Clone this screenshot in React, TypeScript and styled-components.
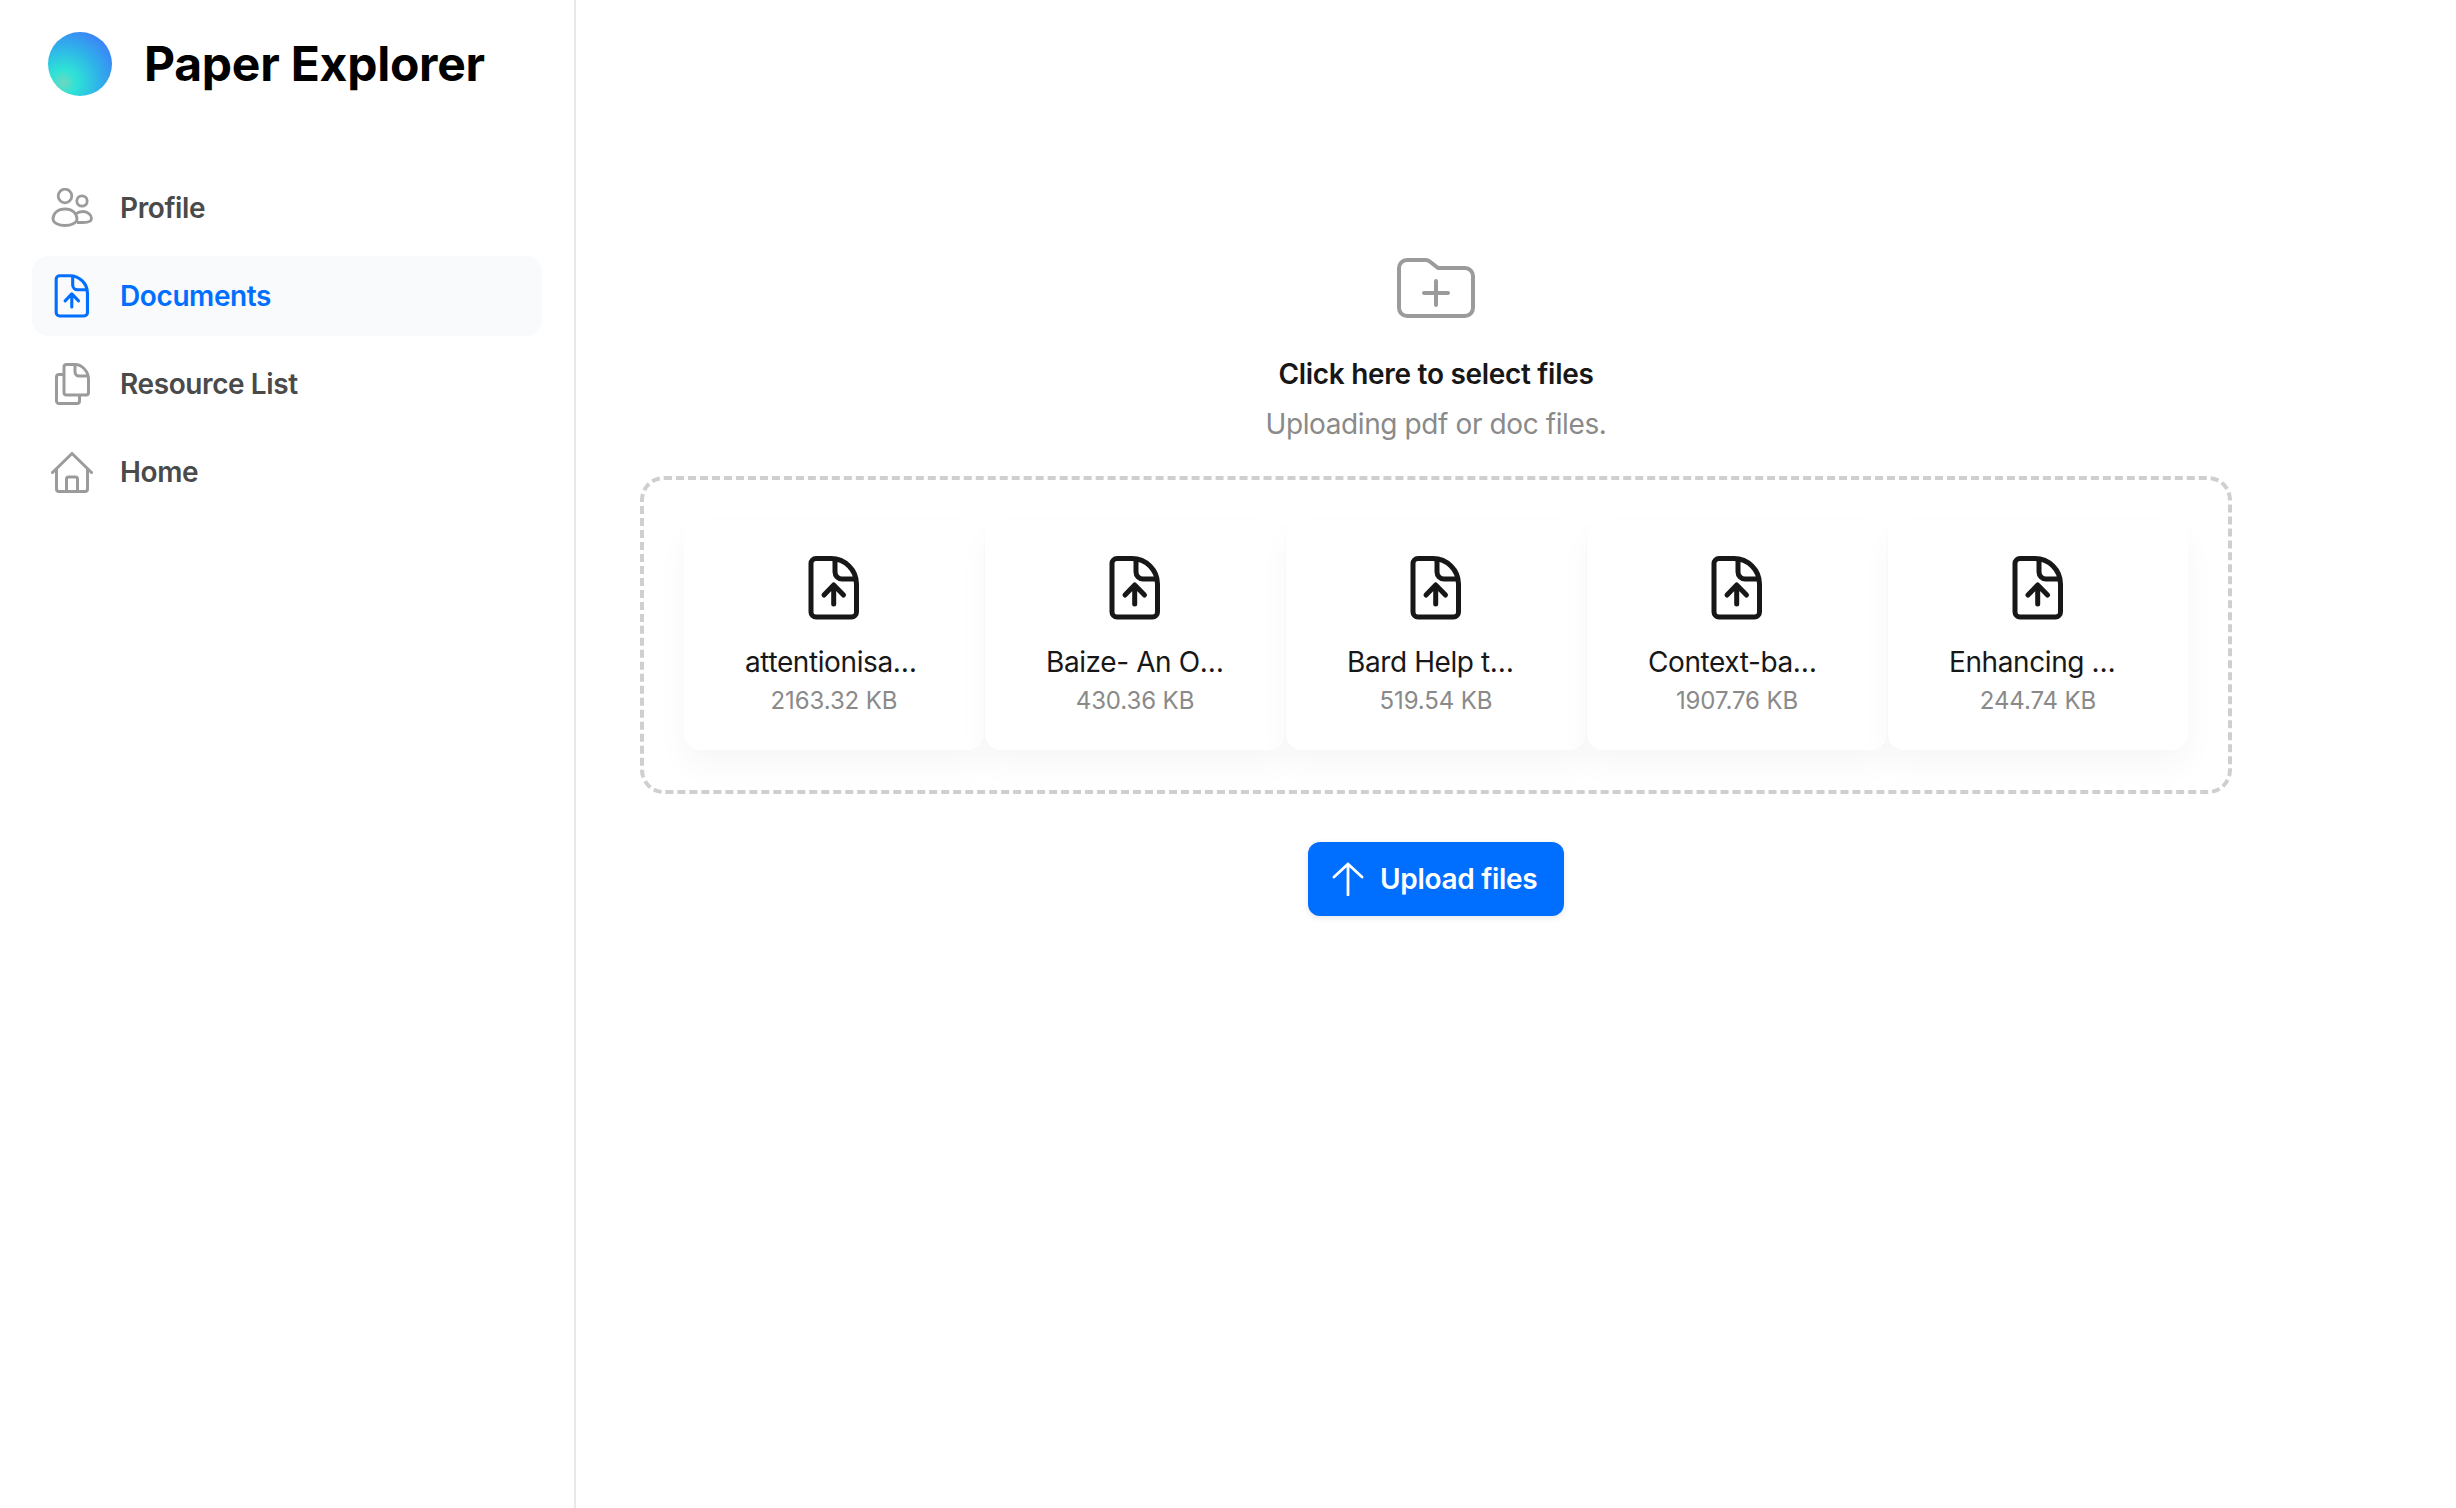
import React from "react";
import styled, { createGlobalStyle } from "styled-components";

const GlobalStyle = createGlobalStyle`
	* {
		box-sizing: border-box;
	}
	html,
	body {
		margin: 0;
		background: #fff;
		font-family: Inter, "Liberation Sans", sans-serif;
	}
`;

const Page = styled.div`
	display: flex;
	width: 2456px;
	height: 1508px;
	overflow: hidden;
`;

const Sidebar = styled.aside`
	width: 576px;
	height: 100%;
	flex-shrink: 0;
	border-right: 2px solid #e8e8e8;
	padding: 32px 32px 0;
`;

const Brand = styled.div`
	display: flex;
	align-items: center;
	gap: 32px;
	padding-left: 16px;
	margin-bottom: 72px;
`;

const Logo = styled.div`
	width: 64px;
	height: 64px;
	border-radius: 50%;
	background: radial-gradient(circle at 24% 79%, #6fd6c0 0%, #2ee3d6 18%, #2fb0ea 52%, #3a88f5 78%);
`;

const BrandName = styled.h1`
	margin: 0;
	font-size: 48px;
	line-height: 64px;
	font-weight: 700;
	letter-spacing: -0.25px;
	color: #000;
`;

const Nav = styled.nav`
	display: flex;
	flex-direction: column;
	gap: 8px;
`;

const NavItem = styled.a<{ $active?: boolean }>`
	display: flex;
	align-items: center;
	gap: 24px;
	height: 80px;
	width: 510px;
	padding-left: 16px;
	border-radius: 16px;
	font-size: 28px;
	font-weight: 600;
	letter-spacing: -0.4px;
	color: ${(p) => (p.$active ? "#006fff" : "#4a4a4a")};
	background: ${(p) => (p.$active ? "#f8fafc" : "transparent")};
`;

const NavIcon = styled.span<{ $active?: boolean }>`
	display: flex;
	align-items: center;
	justify-content: center;
	width: 48px;
	height: 48px;
	color: ${(p) => (p.$active ? "#006fff" : "#9b9b9b")};
`;

const Main = styled.main`
	width: 1656px;
	flex-shrink: 0;
	padding: 258px 0 0 64px;
	display: flex;
	flex-direction: column;
	align-items: center;
`;

const Picker = styled.div`
	display: flex;
	flex-direction: column;
	align-items: center;
	margin-bottom: 30px;
`;

const PickerIcon = styled.svg`
	display: block;
	width: 78px;
	height: 60px;
	color: #9b9b9b;
	margin-bottom: 34px;
`;

const PickerTitle = styled.div`
	font-size: 28px;
	line-height: 44px;
	font-weight: 600;
	letter-spacing: -0.3px;
	color: #171717;
	margin-bottom: 6px;
`;

const PickerHint = styled.div`
	font-size: 28px;
	line-height: 44px;
	letter-spacing: -0.4px;
	color: #8a8a8a;
`;

const DropZone = styled.div`
	display: flex;
	gap: 1px;
	width: 1592px;
	height: 318px;
	padding: 40px;
	border: 4px dashed #cfcfcf;
	border-radius: 24px;
	margin-bottom: 48px;
`;

const FileCard = styled.div`
	display: flex;
	flex-direction: column;
	align-items: center;
	width: 300px;
	height: 230px;
	padding-top: 36px;
	border-radius: 16px;
	background: #fff;
	box-shadow: 0 16px 32px rgba(0, 0, 0, 0.035);
`;

const FileIconBox = styled.div`
	width: 60px;
	height: 64px;
	color: #171717;
	margin-bottom: 22px;

	svg {
		display: block;
	}
`;

const FileName = styled.div`
	width: 178px;
	font-size: 28px;
	line-height: 40px;
	letter-spacing: -0.4px;
	color: #171717;
	white-space: nowrap;
	overflow: hidden;
	text-overflow: ellipsis;
`;

const FileSize = styled.div`
	font-size: 24px;
	line-height: 37px;
	letter-spacing: -0.1px;
	color: #8a8a8a;
`;

const UploadButton = styled.button`
	display: flex;
	align-items: center;
	gap: 16px;
	width: 256px;
	height: 74px;
	padding: 0 0 0 24px;
	border: none;
	border-radius: 12px;
	background: #006fff;
	color: #fff;
	font-family: inherit;
	font-size: 28px;
	font-weight: 600;
	letter-spacing: -0.3px;
	box-shadow: 0 2px 6px rgba(0, 0, 0, 0.1);
	cursor: pointer;
`;

const UploadIcon = styled.svg`
	display: block;
	width: 32px;
	height: 34px;
`;

const FileUpGlyph: React.FC<{ strokeWidth: number; width?: number; height?: number }> = ({
	strokeWidth,
	width,
	height,
}) => (
	<svg
		viewBox="0 0 60 64"
		width={width}
		height={height}
		fill="none"
		stroke="currentColor"
		strokeWidth={strokeWidth}
		strokeLinecap="round"
		strokeLinejoin="round"
	>
		<path d="M12 2.5H27C41 2.5 52.5 14 52.5 28V56a5 5 0 0 1-5 5H12a5 5 0 0 1-5-5V7.5a5 5 0 0 1 5-5Z" />
		<path d="M31 4V16a7 7 0 0 0 7 7H51" />
		<path d="M20 39 29.7 29 39.5 39M29.7 30V48" />
	</svg>
);

const UsersGlyph = () => (
	<svg viewBox="0 0 42 40" width={42} height={40} fill="none" stroke="currentColor" strokeWidth={2.8}>
		<circle cx="14" cy="8" r="6.8" />
		<circle cx="31" cy="13" r="5.2" />
		<path d="M2 31C2 25 7 21 14 21S26 25 26 31C26 35 20 37.5 14 37.5S2 35 2 31Z" />
		<path d="M24.5 26C26.5 24.5 29 23.5 32 23.5 37 23.5 40.5 27 40.5 30.5 40.5 33 37 34.5 32 34.5H26" />
	</svg>
);

const PagesGlyph = () => (
	<svg viewBox="0 0 38 42" width={38} height={42} fill="none" stroke="currentColor" strokeWidth={3} strokeLinejoin="round">
		<path d="M13.5 1.5H22C29.5 1.5 35.5 9 35.5 16V29.5a2.5 2.5 0 0 1-2.5 2.5H13.5a2.5 2.5 0 0 1-2.5-2.5V4a2.5 2.5 0 0 1 2.5-2.5Z" />
		<path d="M22 2.5V9a4 4 0 0 0 4 4H34.5" />
		<path d="M11 11.5H6a2.5 2.5 0 0 0-2.5 2.5V38a2.5 2.5 0 0 0 2.5 2.5H24a2.5 2.5 0 0 0 2.5-2.5V32" />
	</svg>
);

const HomeGlyph = () => (
	<svg viewBox="0 0 42 41" width={42} height={41} fill="none" stroke="currentColor" strokeWidth={3} strokeLinejoin="round" strokeLinecap="round">
		<path d="M1.5 20.5 21 1.5 40.5 20.5" />
		<path d="M5.5 17V37a2.5 2.5 0 0 0 2.5 2.5H34A2.5 2.5 0 0 0 36.5 37V17" />
		<path d="M15.5 39.5V27a2 2 0 0 1 2-2H24.5a2 2 0 0 1 2 2V39.5" />
	</svg>
);

const navItems = [
	{ label: "Profile", icon: <UsersGlyph /> },
	{ label: "Documents", icon: <FileUpGlyph strokeWidth={4.5} width={42} height={44} />, active: true },
	{ label: "Resource List", icon: <PagesGlyph /> },
	{ label: "Home", icon: <HomeGlyph /> },
];

const files = [
	{ name: "attentionisallyouneed.pdf", size: "2163.32 KB" },
	{ name: "Baize- An Open-Source Chat Model.pdf", size: "430.36 KB" },
	{ name: "Bard Help the Whole World.pdf", size: "519.54 KB" },
	{ name: "Context-based Retrieval.pdf", size: "1907.76 KB" },
	{ name: "Enhancing Chat Language Models.pdf", size: "244.74 KB" },
];

const App: React.FC = () => {
	return (
		<Page>
			<GlobalStyle />
			<Sidebar>
				<Brand>
					<Logo />
					<BrandName>Paper Explorer</BrandName>
				</Brand>
				<Nav>
					{navItems.map((item) => (
						<NavItem key={item.label} $active={item.active}>
							<NavIcon $active={item.active}>{item.icon}</NavIcon>
							{item.label}
						</NavItem>
					))}
				</Nav>
			</Sidebar>
			<Main>
				<Picker>
					<PickerIcon viewBox="0 0 78 60" fill="none" stroke="currentColor" strokeWidth={4} strokeLinecap="round" strokeLinejoin="round">
						<path d="M10 2H28.5a7 7 0 0 1 4.6 1.7L41 10H68a8 8 0 0 1 8 8V50a8 8 0 0 1-8 8H10a8 8 0 0 1-8-8V10a8 8 0 0 1 8-8Z" />
						<path d="M39 23V47M27 35H51" />
					</PickerIcon>
					<PickerTitle>Click here to select files</PickerTitle>
					<PickerHint>Uploading pdf or doc files.</PickerHint>
				</Picker>
				<DropZone>
					{files.map((file) => (
						<FileCard key={file.size}>
							<FileIconBox>
								<FileUpGlyph strokeWidth={5} width={60} height={64} />
							</FileIconBox>
							<FileName>{file.name}</FileName>
							<FileSize>{file.size}</FileSize>
						</FileCard>
					))}
				</DropZone>
				<UploadButton>
					<UploadIcon viewBox="0 0 32 34" fill="none" stroke="currentColor" strokeWidth={2.8} strokeLinecap="round" strokeLinejoin="round">
						<path d="M2 15 16 2 30 15M16 2V33" />
					</UploadIcon>
					Upload files
				</UploadButton>
			</Main>
		</Page>
	);
};

export default App;
